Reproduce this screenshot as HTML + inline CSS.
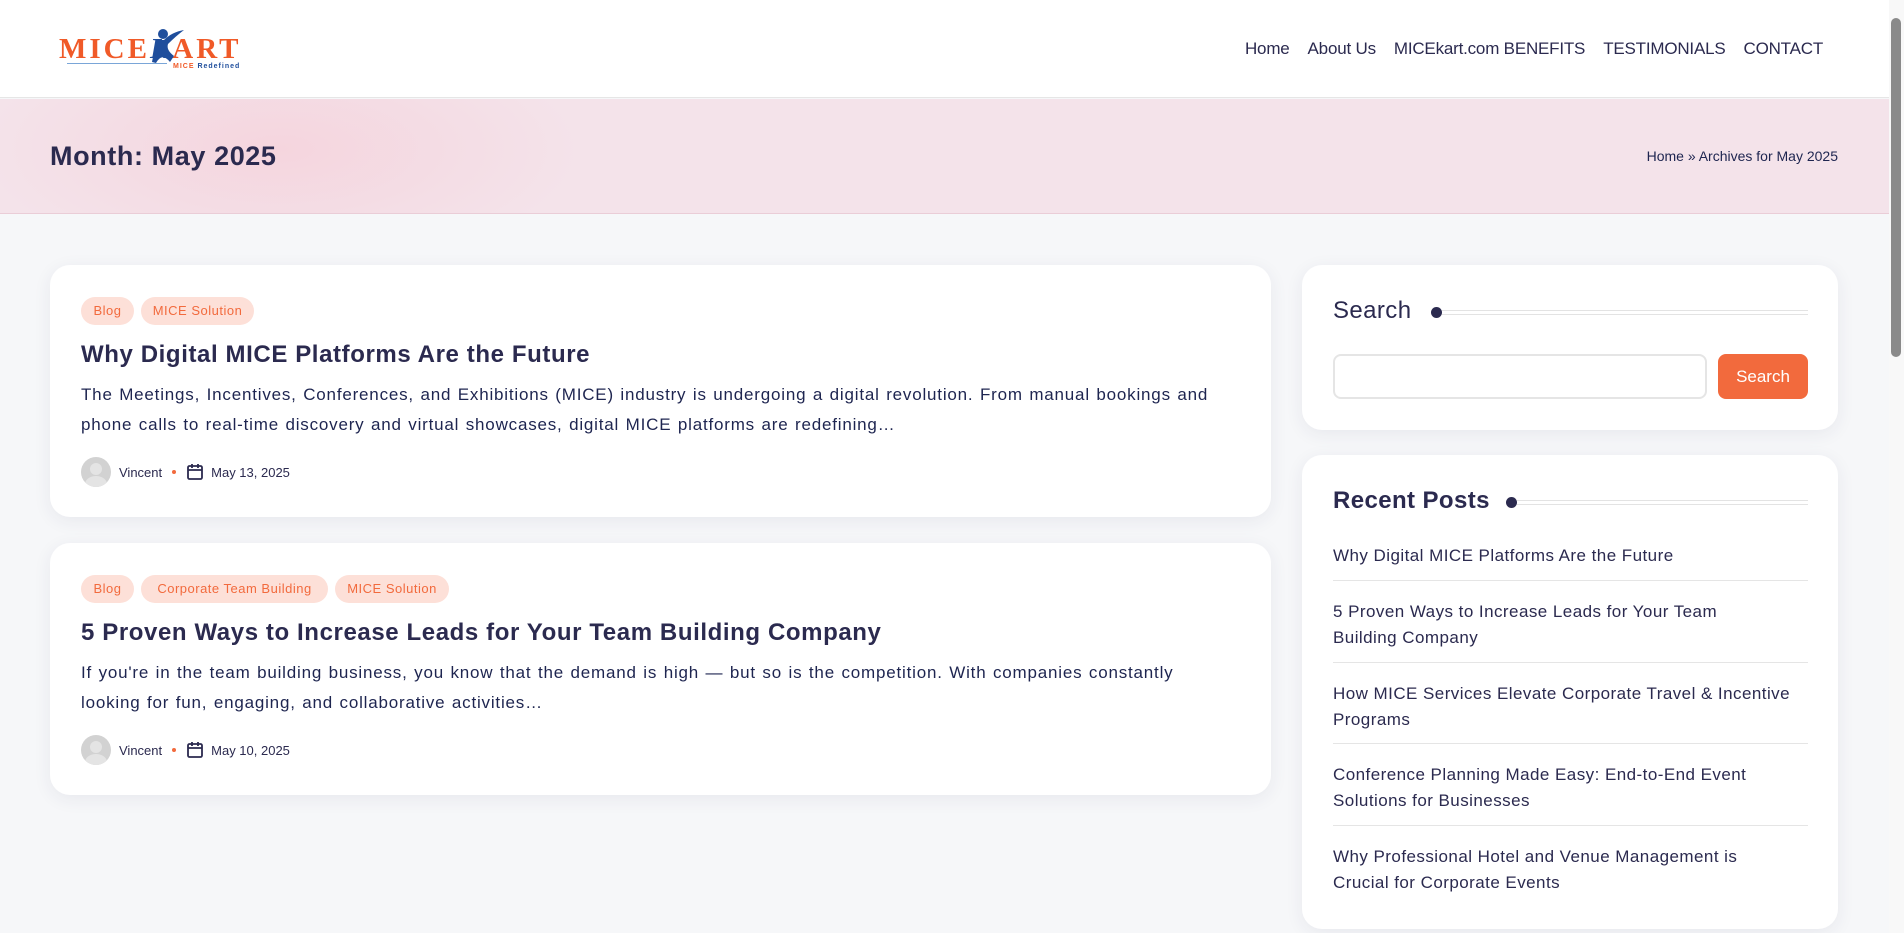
<!DOCTYPE html>
<html><head><meta charset="utf-8"><style>
*{margin:0;padding:0;box-sizing:border-box}
body{width:1904px;height:933px;overflow:hidden;background:#f6f7f9;font-family:"Liberation Sans",sans-serif;color:#2b2a4f;position:relative}
.abs{position:absolute}
header{position:absolute;left:0;top:0;width:1889px;height:98px;background:#fff;border-bottom:1px solid #e6e6e6}
nav{position:absolute;right:66px;top:39px;font-size:17px;color:#2b2a4f;white-space:nowrap;letter-spacing:-0.2px}
nav span{margin-left:18px}
.band{position:absolute;left:0;top:99px;width:1889px;height:115px;background:radial-gradient(ellipse 300px 120px at 280px 50px,#f5d5de,transparent),#f4e3ea;border-bottom:1px solid #eacdd7}
.card{position:absolute;background:#fff;border-radius:20px;box-shadow:0 4px 18px rgba(40,40,80,.07)}
.tag{position:absolute;height:28px;line-height:28px;border-radius:14px;background:#fde0d8;color:#f26a3d;font-size:13px;text-align:center;letter-spacing:0.5px}
.t{position:absolute;left:31px;font-size:24px;font-weight:bold;color:#2b2a4f;white-space:nowrap;letter-spacing:0.6px}
.ex{position:absolute;left:31px;font-size:17px;line-height:30px;color:#1e2550;width:1165px;letter-spacing:0.8px;word-spacing:1px}
.meta{position:absolute;left:31px;font-size:13px;color:#2b2a4f;height:30px;display:flex;align-items:center}
.av{width:30px;height:30px;border-radius:50%;background:#d2d2d2;margin-right:8px;position:relative;overflow:hidden}
.av:before{content:"";position:absolute;left:9px;top:6px;width:12px;height:12px;border-radius:50%;background:#e4e4e4}
.av:after{content:"";position:absolute;left:4px;top:19px;width:22px;height:16px;border-radius:50%;background:#e4e4e4}
.dot{width:4px;height:4px;border-radius:50%;background:#f26a3d;margin:0 10px}
.h{position:absolute;left:31px;font-size:24px;color:#2b2a4f;white-space:nowrap;letter-spacing:0.4px}
.line{position:absolute;height:5px;border-top:1px solid #e3e3e3;border-bottom:1px solid #e3e3e3}
.bul{position:absolute;width:11px;height:11px;border-radius:50%;background:#2b2a4f}
.rp{position:absolute;left:31px;width:440px;font-size:17px;line-height:26px;color:#2b2a4f;letter-spacing:0.45px}
.sep{position:absolute;left:31px;width:475px;height:1px;background:#e5e5e5}
</style></head><body>
<header>
 <div class="abs" style="left:59px;top:33px;font-family:'Liberation Serif',serif;font-size:29px;font-weight:bold;color:#f05a28;letter-spacing:3px">MICE<span style="color:#1f4e9c;font-style:italic">K</span>ART</div>
 <svg class="abs" style="left:148px;top:26px" width="40" height="40" viewBox="0 0 40 40"><circle cx="15" cy="8" r="5" fill="#1f4e9c"/><path d="M10 14 Q6 24 4 36 L8 37 Q14 26 22 36 L26 30 Q18 24 20 18 Q28 10 36 4 Q24 6 16 14Z" fill="#1f4e9c"/></svg>
 <div class="abs" style="left:67px;top:63px;width:100px;height:1px;background:#7aa6d8"></div>
 <div class="abs" style="left:173px;top:63px;font-size:7px;color:#1f4e9c;letter-spacing:1px;font-weight:bold"><span style="color:#f05a28">MICE</span> Redefined</div>
 <nav><span>Home</span><span>About Us</span><span>MICEkart.com BENEFITS</span><span>TESTIMONIALS</span><span>CONTACT</span></nav>
</header>
<div class="band">
 <div class="abs" style="left:50px;top:42px;font-size:27px;font-weight:bold;color:#2b2a4f;letter-spacing:0.6px">Month: May 2025</div>
 <div class="abs" style="right:51px;top:49px;font-size:14px;color:#1e2550">Home » Archives for May 2025</div>
</div>

<div class="card" style="left:50px;top:265px;width:1221px;height:252px">
 <div class="tag" style="left:31px;top:32px;width:53px">Blog</div>
 <div class="tag" style="left:91px;top:32px;width:113px">MICE Solution</div>
 <div class="t" style="top:76px">Why Digital MICE Platforms Are the Future</div>
 <div class="ex" style="top:115px">The Meetings, Incentives, Conferences, and Exhibitions (MICE) industry is undergoing a digital revolution. From manual bookings and<br>phone calls to real-time discovery and virtual showcases, digital MICE platforms are redefining…</div>
 <div class="meta" style="top:192px"><div class="av"></div>Vincent<div class="dot"></div><svg width="18" height="18" viewBox="0 0 18 18" style="margin-right:7px"><rect x="2" y="3" width="14" height="13" rx="1.5" fill="none" stroke="#2b2a4f" stroke-width="1.8"/><path d="M2 7h14M6 1v4M12 1v4" stroke="#2b2a4f" stroke-width="1.8"/></svg>May 13, 2025</div>
</div>

<div class="card" style="left:50px;top:543px;width:1221px;height:252px">
 <div class="tag" style="left:31px;top:32px;width:53px">Blog</div>
 <div class="tag" style="left:91px;top:32px;width:187px">Corporate Team Building</div>
 <div class="tag" style="left:285px;top:32px;width:114px">MICE Solution</div>
 <div class="t" style="top:76px">5 Proven Ways to Increase Leads for Your Team Building Company</div>
 <div class="ex" style="top:115px">If you're in the team building business, you know that the demand is high — but so is the competition. With companies constantly<br>looking for fun, engaging, and collaborative activities…</div>
 <div class="meta" style="top:192px"><div class="av"></div>Vincent<div class="dot"></div><svg width="18" height="18" viewBox="0 0 18 18" style="margin-right:7px"><rect x="2" y="3" width="14" height="13" rx="1.5" fill="none" stroke="#2b2a4f" stroke-width="1.8"/><path d="M2 7h14M6 1v4M12 1v4" stroke="#2b2a4f" stroke-width="1.8"/></svg>May 10, 2025</div>
</div>

<div class="card" style="left:1302px;top:265px;width:536px;height:165px">
 <div class="h" style="top:32px">Search</div>
 <div class="bul" style="left:129px;top:42px"></div>
 <div class="line" style="left:140px;top:45px;width:366px"></div>
 <div class="abs" style="left:31px;top:89px;width:374px;height:45px;border:2px solid #e5e5e5;border-radius:8px"></div>
 <div class="abs" style="left:416px;top:89px;width:90px;height:45px;background:#f26a3d;border-radius:8px;color:#fff;font-size:17px;text-align:center;line-height:45px">Search</div>
</div>

<div class="card" style="left:1302px;top:455px;width:536px;height:474px">
 <div class="h" style="top:32px;font-weight:bold">Recent Posts</div>
 <div class="bul" style="left:204px;top:42px"></div>
 <div class="line" style="left:215px;top:45px;width:291px"></div>
 <div class="rp" style="top:88px">Why Digital MICE Platforms Are the Future</div>
 <div class="sep" style="top:125px"></div>
 <div class="rp" style="top:144px">5 Proven Ways to Increase Leads for Your Team Building Company</div>
 <div class="sep" style="top:207px"></div>
 <div class="rp" style="top:226px;width:480px">How MICE Services Elevate Corporate Travel &amp; Incentive Programs</div>
 <div class="sep" style="top:288px"></div>
 <div class="rp" style="top:307px;width:480px">Conference Planning Made Easy: End-to-End Event Solutions for Businesses</div>
 <div class="sep" style="top:370px"></div>
 <div class="rp" style="top:389px">Why Professional Hotel and Venue Management is Crucial for Corporate Events</div>
</div>

<div class="abs" style="left:1889px;top:0;width:15px;height:933px;background:#f8f8f8"></div>
<div class="abs" style="left:1891px;top:18px;width:10px;height:339px;background:#8a8a8a;border-radius:5px"></div>
</body></html>
